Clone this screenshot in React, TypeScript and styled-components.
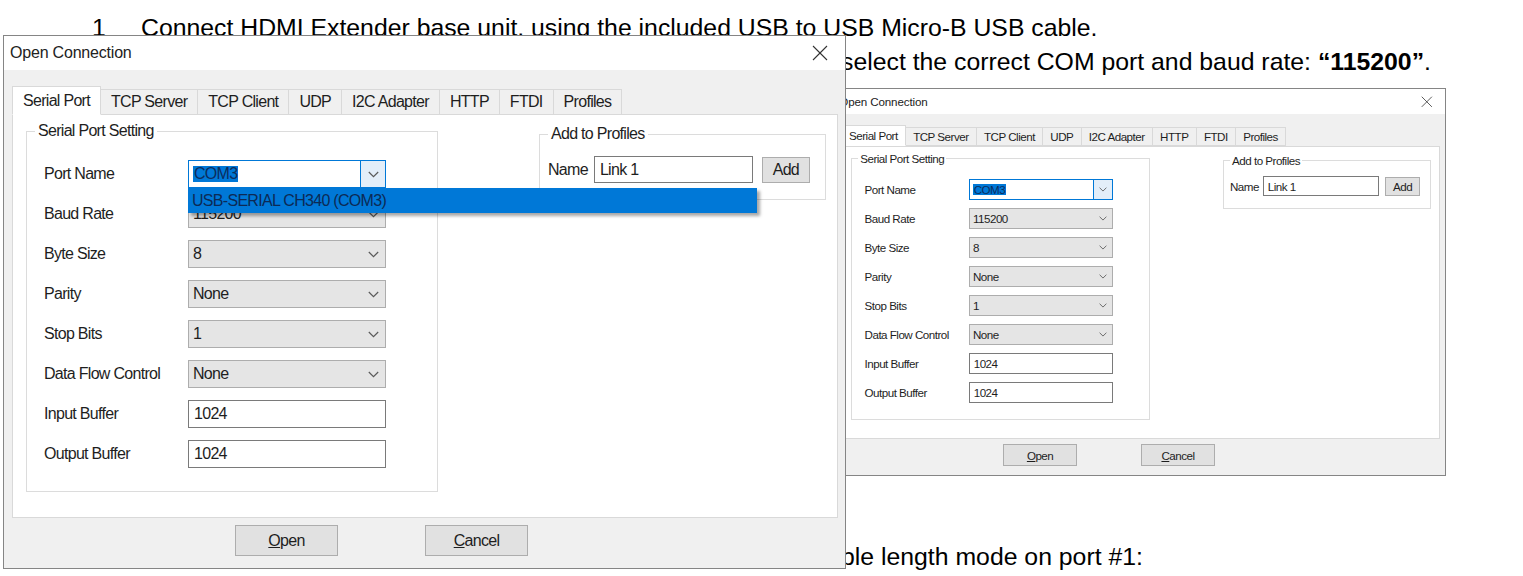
import React from "react";
import styled, { createGlobalStyle } from "styled-components";

const GlobalStyle = createGlobalStyle`
  html, body {
    margin: 0;
    padding: 0;
    background: #ffffff;
  }
  body {
    font-family: "Liberation Sans", Arial, sans-serif;
  }
`;

const Page = styled.div`
  position: relative;
  box-sizing: border-box;
  width: 1523px;
  height: 576px;
  overflow: hidden;
  padding-top: 11px;
  background: #ffffff;
`;

const DocLine = styled.p<{ $indent: number }>`
  margin: 0;
  padding-left: ${(p) => p.$indent}px;
  font-size: 24.8px;
  line-height: 34px;
  color: #000;
  white-space: nowrap;
`;

const ListNum = styled.span`
  display: inline-block;
  width: 49px;
`;

const Figure = styled.div`
  margin: 9px 0 64px 834px;
  width: 612px;
  height: 388px;
`;

const Scaled = styled.div`
  zoom: 0.726;
`;

const Overlay = styled.div`
  position: absolute;
  left: 3px;
  top: 35px;
  z-index: 2;
`;

const Window = styled.div`
  box-sizing: border-box;
  width: 843px;
  height: 534px;
  border: 1px solid #858585;
  background: #f0f0f0;
  display: flex;
  flex-direction: column;
  font-family: "Liberation Sans", Arial, sans-serif;
  color: #1e1e1e;
  letter-spacing: -0.7px;
`;

const TitleBar = styled.div`
  height: 34px;
  background: #ffffff;
  display: flex;
  align-items: center;
  justify-content: space-between;
  padding: 0 17px 0 6px;
  font-size: 16px;
  letter-spacing: -0.2px;
  color: #222;
`;

const Body = styled.div`
  flex: 1;
  display: flex;
  flex-direction: column;
  padding: 17px 7px 0 8px;
`;

const TabStrip = styled.div`
  display: flex;
  align-items: flex-end;
  height: 28px;
  margin-bottom: -1px;
  position: relative;
  z-index: 1;
`;

const Tab = styled.div<{ $active?: boolean }>`
  box-sizing: border-box;
  height: ${(p) => (p.$active ? 29 : 26)}px;
  padding: 0 10px;
  display: flex;
  align-items: center;
  font-size: 16px;
  border: 1px solid #d9d9d9;
  border-bottom-color: ${(p) => (p.$active ? "#ffffff" : "#d9d9d9")};
  background: ${(p) => (p.$active ? "#ffffff" : "#f0f0f0")};
  & + & {
    border-left: none;
  }
`;

const Panel = styled.div`
  box-sizing: border-box;
  width: 826px;
  height: 404px;
  background: #ffffff;
  border: 1px solid #d9d9d9;
  display: flex;
  justify-content: space-between;
  align-items: flex-start;
  padding: 7px 11px 0 13px;
`;

const Group = styled.fieldset<{ $width: number }>`
  margin: 0;
  min-width: 0;
  box-sizing: border-box;
  width: ${(p) => p.$width}px;
  border: 1px solid #dcdcdc;
`;

const SerialGroup = styled(Group)`
  padding: 20px 0 23px 0;
`;

const ProfileGroup = styled(Group)`
  margin-top: 3px;
  padding: 13px 0 16px 0;
`;

const Legend = styled.legend`
  margin-left: 8px;
  padding: 0 3px;
  font-size: 16px;
  line-height: 18px;
`;

const FormGrid = styled.div`
  display: grid;
  grid-template-columns: 144px 198px;
  grid-auto-rows: 28px;
  row-gap: 12px;
  align-items: center;
  margin-left: 17px;
`;

const ProfileRow = styled.div`
  display: flex;
  align-items: center;
  padding-left: 8px;
`;

const Label = styled.span`
  font-size: 16px;
`;

const Combo = styled.div<{ $focused?: boolean }>`
  position: relative;
  box-sizing: border-box;
  width: 198px;
  height: 28px;
  border: 1px solid ${(p) => (p.$focused ? "#0078d7" : "#adadad")};
  background: ${(p) => (p.$focused ? "#ffffff" : "#e5e5e5")};
  display: flex;
  align-items: center;
  padding-left: 4px;
  font-size: 16px;
`;

const ComboArrow = styled.span<{ $focused?: boolean }>`
  margin-left: auto;
  width: 24px;
  align-self: stretch;
  display: flex;
  align-items: center;
  justify-content: center;
  border-left: ${(p) => (p.$focused ? "1px solid #0078d7" : "none")};
  background: ${(p) => (p.$focused ? "#e3eef9" : "transparent")};
`;

const Selected = styled.span`
  background: #0078d7;
  color: #0c2d5e;
  line-height: 16px;
  padding: 0 1px;
`;

const DropList = styled.div`
  position: absolute;
  left: -1px;
  top: calc(100% + 1px);
  box-sizing: border-box;
  width: 569px;
  height: 25px;
  padding-left: 4px;
  display: flex;
  align-items: center;
  background: #0078d7;
  color: #0c2a55;
  font-size: 16px;
  box-shadow: 3px 3px 3px rgba(0, 0, 0, 0.35);
  z-index: 5;
`;

const TextBox = styled.div<{ $width: number; $height: number }>`
  box-sizing: border-box;
  width: ${(p) => p.$width}px;
  height: ${(p) => p.$height}px;
  border: 1px solid #7a7a7a;
  background: #ffffff;
  display: flex;
  align-items: center;
  padding-left: 5px;
  font-size: 16px;
`;

const NameLabel = styled(Label)`
  margin-right: 6px;
`;

const Button = styled.button<{ $width: number; $height: number }>`
  box-sizing: border-box;
  width: ${(p) => p.$width}px;
  height: ${(p) => p.$height}px;
  padding: 0;
  border: 1px solid #adadad;
  background: #e1e1e1;
  font-family: inherit;
  font-size: 16px;
  letter-spacing: -0.7px;
  color: #1e1e1e;
`;

const AddButton = styled(Button)`
  margin-left: 9px;
`;

const ButtonRow = styled.div`
  display: flex;
  gap: 87px;
  margin-top: 7px;
  padding-left: 223px;
`;

const Chevron = () => (
  <svg width="11" height="7" viewBox="0 0 11 7">
    <polyline points="0.8,1 5.5,5.6 10.2,1" fill="none" stroke="#5a5a5a" strokeWidth="1.2" />
  </svg>
);

const CloseIcon = () => (
  <svg width="16" height="16" viewBox="0 0 16 16">
    <line x1="1" y1="1" x2="15" y2="15" stroke="#333" strokeWidth="1.1" />
    <line x1="15" y1="1" x2="1" y2="15" stroke="#333" strokeWidth="1.1" />
  </svg>
);

const tabs = ["Serial Port", "TCP Server", "TCP Client", "UDP", "I2C Adapter", "HTTP", "FTDI", "Profiles"];

type Row = { label: string; kind: "combo" | "text"; value: string; focused?: boolean };

const rows: Row[] = [
  { label: "Port Name", kind: "combo", value: "COM3", focused: true },
  { label: "Baud Rate", kind: "combo", value: "115200" },
  { label: "Byte Size", kind: "combo", value: "8" },
  { label: "Parity", kind: "combo", value: "None" },
  { label: "Stop Bits", kind: "combo", value: "1" },
  { label: "Data Flow Control", kind: "combo", value: "None" },
  { label: "Input Buffer", kind: "text", value: "1024" },
  { label: "Output Buffer", kind: "text", value: "1024" },
];

const OpenConnection: React.FC<{ dropdownOpen?: boolean }> = ({ dropdownOpen }) => (
  <Window>
    <TitleBar>
      <span>Open Connection</span>
      <CloseIcon />
    </TitleBar>
    <Body>
      <TabStrip>
        {tabs.map((t, i) => (
          <Tab key={t} $active={i === 0}>
            {t}
          </Tab>
        ))}
      </TabStrip>
      <Panel>
        <SerialGroup $width={412}>
          <Legend>Serial Port Setting</Legend>
          <FormGrid>
            {rows.map((r) => (
              <React.Fragment key={r.label}>
                <Label>{r.label}</Label>
                {r.kind === "combo" ? (
                  <Combo $focused={r.focused}>
                    {r.focused ? <Selected>{r.value}</Selected> : <span>{r.value}</span>}
                    <ComboArrow $focused={r.focused}>
                      <Chevron />
                    </ComboArrow>
                    {r.focused && dropdownOpen && <DropList>USB-SERIAL CH340 (COM3)</DropList>}
                  </Combo>
                ) : (
                  <TextBox $width={198} $height={28}>
                    {r.value}
                  </TextBox>
                )}
              </React.Fragment>
            ))}
          </FormGrid>
        </SerialGroup>
        <ProfileGroup $width={287}>
          <Legend>Add to Profiles</Legend>
          <ProfileRow>
            <NameLabel>Name</NameLabel>
            <TextBox $width={159} $height={27}>
              Link 1
            </TextBox>
            <AddButton $width={48} $height={26}>
              Add
            </AddButton>
          </ProfileRow>
        </ProfileGroup>
      </Panel>
      <ButtonRow>
        <Button $width={103} $height={31}>
          <u>O</u>pen
        </Button>
        <Button $width={103} $height={31}>
          <u>C</u>ancel
        </Button>
      </ButtonRow>
    </Body>
  </Window>
);

export default function App() {
  return (
    <>
      <GlobalStyle />
      <Page>
        <DocLine $indent={92}>
          <ListNum>1</ListNum>Connect HDMI Extender base unit, using the included USB to USB Micro-B USB cable.
        </DocLine>
        <DocLine $indent={841}>
          select the correct COM port and baud rate: <b>“115200”</b>.
        </DocLine>
        <Figure>
          <Scaled>
            <OpenConnection />
          </Scaled>
        </Figure>
        <DocLine $indent={841}>ble length mode on port #1:</DocLine>
        <Overlay>
          <OpenConnection dropdownOpen />
        </Overlay>
      </Page>
    </>
  );
}
